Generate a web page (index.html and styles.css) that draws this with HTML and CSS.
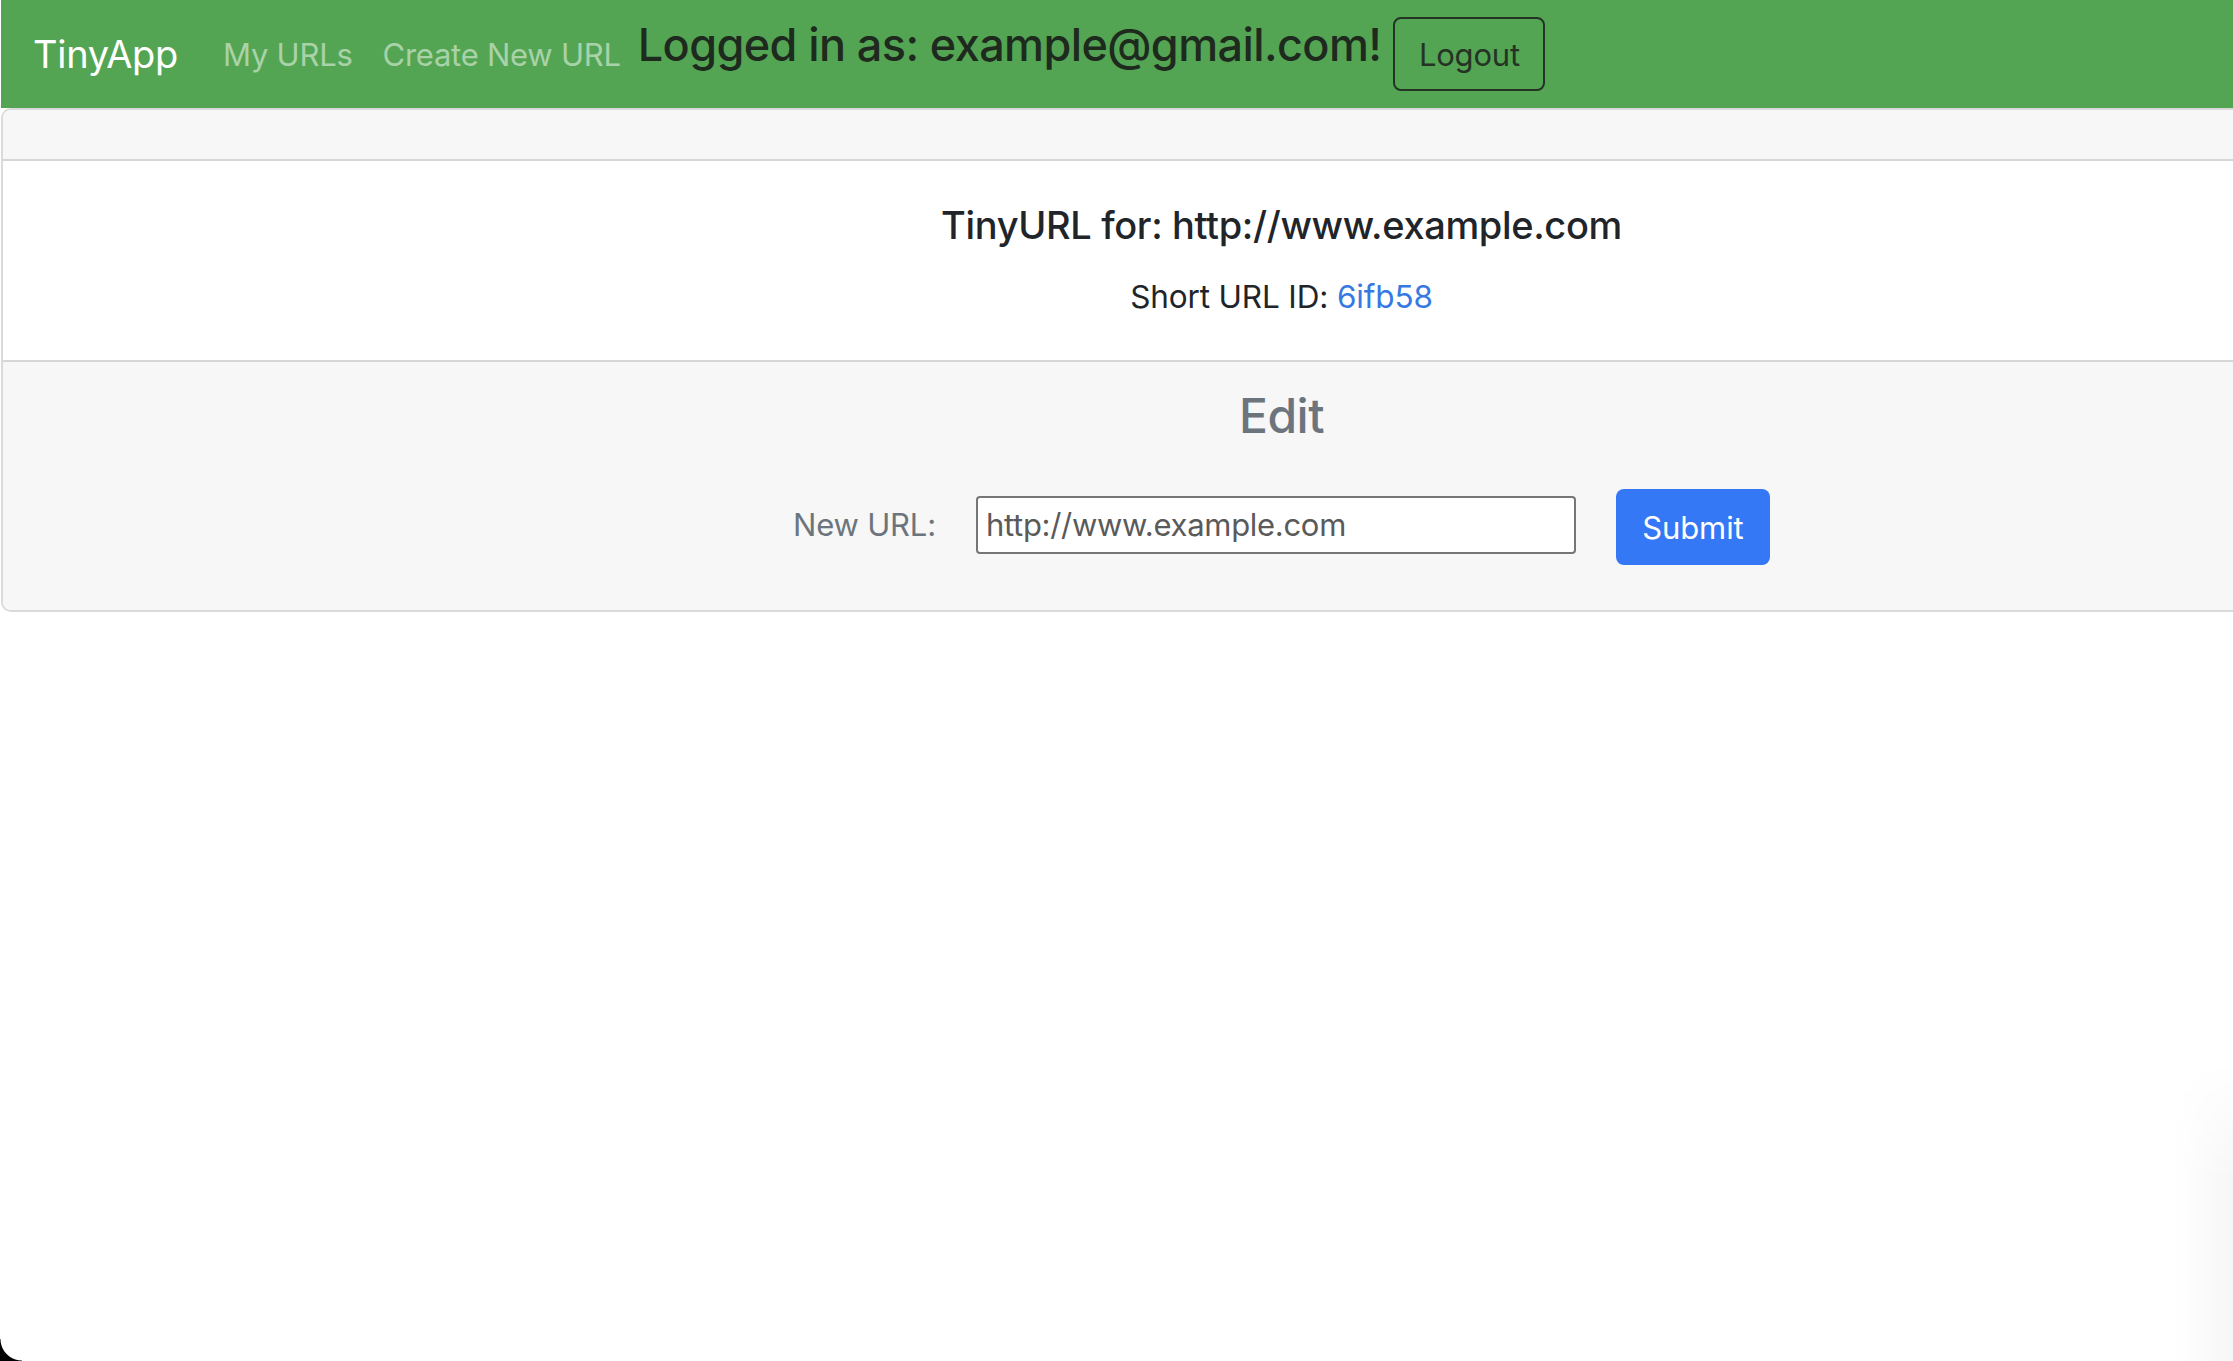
FILE: index.html
```html
<!DOCTYPE html>
<html lang="en">
<head>
<meta charset="utf-8">
<title>TinyApp</title>
<link rel="stylesheet" href="styles.css">
</head>
<body>
<div class="page">
  <nav class="navbar">
    <a class="brand" href="#">TinyApp</a>
    <a class="nav-link" href="#">My URLs</a>
    <a class="nav-link" href="#">Create New URL</a>
    <h4 class="login">Logged in as: example@gmail.com!</h4>
    <button class="btn-logout" type="button">Logout</button>
  </nav>
  <main class="card">
    <div class="card-header"></div>
    <div class="card-body">
      <h5 class="card-title">TinyURL for: http://www.example.com</h5>
      <p class="card-text">Short URL ID: <a class="short-link" href="#">6ifb58</a></p>
    </div>
    <div class="card-footer">
      <h3 class="edit-title">Edit</h3>
      <form class="edit-form">
        <label class="edit-label" for="longURL">New URL:</label>
        <input class="edit-input" id="longURL" type="text" value="http://www.example.com">
        <button class="btn-submit" type="submit">Submit</button>
      </form>
    </div>
  </main>
</div>
<div class="corner-bl"></div>
<div class="shadow-br"></div>
</body>
</html>
```

FILE: styles.css
```css
html, body {
  margin: 0;
  padding: 0;
  background: #ffffff;
  overflow: hidden;
  height: 100%;
}

body {
  font-family: Inter, "Noto Sans", "Liberation Sans", sans-serif;
  font-size: 31px;
  color: #212529;
}

.page {
  width: 2559px;
  margin-left: 1px;
}

.navbar {
  display: flex;
  align-items: center;
  height: 108px;
  padding: 0 0 0 32px;
  background: #53a553;
  box-sizing: border-box;
}

.brand {
  font-size: 38px;
  color: #ffffff;
  text-decoration: none;
  margin-right: 30px;
  letter-spacing: -0.3px;
}

.nav-link {
  font-size: 31px;
  color: #a9d2a9;
  text-decoration: none;
  padding: 0 15px;
  letter-spacing: -0.25px;
}

.login {
  margin: 0 12px 20px 2px;
  font-size: 45px;
  font-weight: 500;
  color: #1f2a1f;
  letter-spacing: -0.6px;
}

.btn-logout {
  font-family: inherit;
  font-size: 31px;
  color: #253325;
  background: transparent;
  border: 2px solid #253325;
  border-radius: 8px;
  height: 74px;
  width: 152px;
  padding: 0;
  letter-spacing: -0.2px;
}

.card {
  display: block;
  border: 2px solid #dadada;
  border-right: none;
  border-top-left-radius: 10px;
  border-bottom-left-radius: 10px;
  margin-top: 0;
}

.card-header {
  height: 49px;
  background: #f7f7f7;
  border-bottom: 2px solid #d6d6d6;
  border-top-left-radius: 8px;
}

.card-body {
  padding: 41px 31px 40px;
  text-align: center;
  background: #ffffff;
}

.card-title {
  margin: 0 0 25px;
  font-size: 38px;
  line-height: 47px;
  font-weight: 500;
  color: #212529;
  letter-spacing: -0.35px;
}

.card-text {
  margin: 0;
  line-height: 46px;
  font-size: 31.5px;
  letter-spacing: -0.15px;
}

.short-link {
  color: #3779e2;
  text-decoration: none;
}

.card-footer {
  background: #f7f7f7;
  border-top: 2px solid #d6d6d6;
  padding: 21px 31px 45px;
  text-align: center;
  border-bottom-left-radius: 8px;
}

.edit-title {
  margin: 0 0 36px;
  font-size: 48px;
  line-height: 65px;
  font-weight: 500;
  color: #6c757d;
  letter-spacing: -0.5px;
}

.edit-form {
  display: flex;
  align-items: center;
  justify-content: center;
  gap: 40px;
}

.edit-label {
  font-size: 31px;
  color: #6c757d;
  letter-spacing: -0.2px;
}

.edit-input {
  box-sizing: border-box;
  width: 600px;
  height: 58px;
  padding: 0 8px;
  font-family: inherit;
  font-size: 31px;
  color: #5a5a5a;
  background: #ffffff;
  border: 2px solid #767676;
  border-radius: 4px;
  letter-spacing: -0.3px;
}

.btn-submit {
  box-sizing: border-box;
  width: 154px;
  height: 76px;
  font-family: inherit;
  font-size: 31px;
  color: #ffffff;
  background: #3478f6;
  border: none;
  border-radius: 8px;
  margin-top: 5px;
  letter-spacing: -0.1px;
}

.corner-bl {
  position: fixed;
  left: 0;
  bottom: 0;
  width: 22px;
  height: 22px;
  background: radial-gradient(circle at 22px 0, transparent 21px, #000000 22px);
}

.shadow-br {
  position: fixed;
  right: 0;
  bottom: 0;
  width: 60px;
  height: 300px;
  background: linear-gradient(to right, rgba(0,0,0,0), rgba(0,0,0,0.035));
  -webkit-mask-image: linear-gradient(to bottom, transparent, #000 40%);
  mask-image: linear-gradient(to bottom, transparent, #000 40%);
}
```
